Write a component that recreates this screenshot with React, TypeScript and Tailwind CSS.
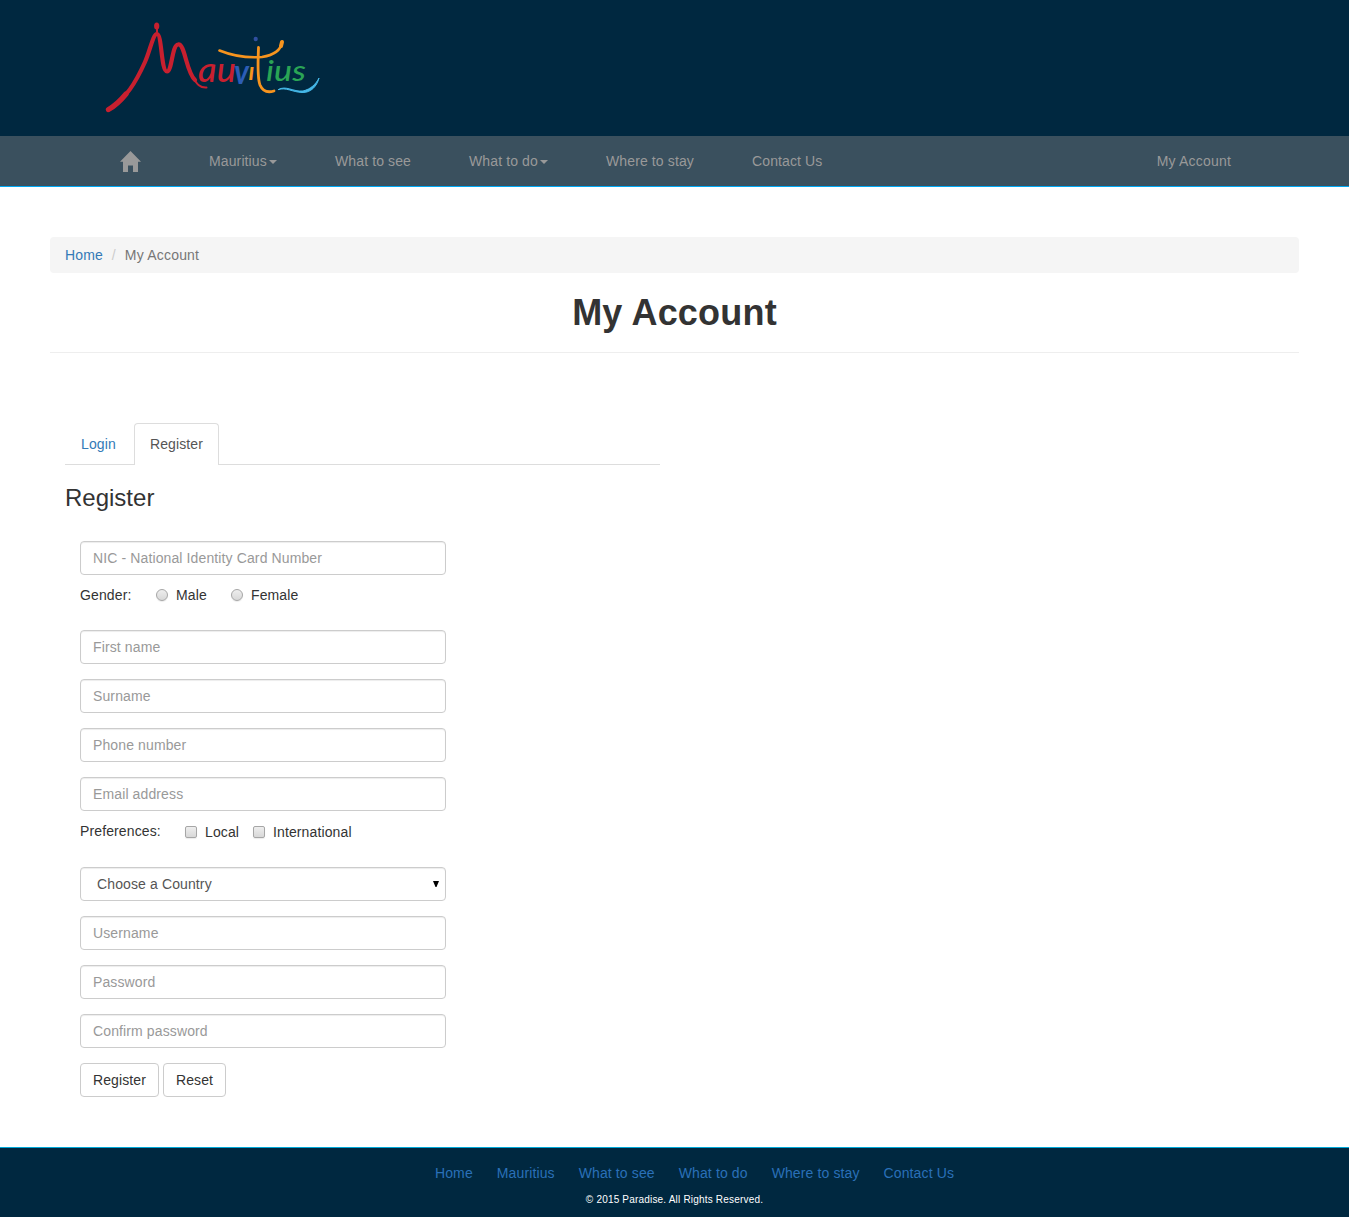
import React from "react";

function Logo() {
  return (
    <svg className="block h-[105px] w-[225px]" viewBox="100 15 225 105" fill="none" strokeLinecap="round" strokeLinejoin="round" role="img" aria-label="Mauritius">
      <path d="M108 110C126 99 136 82 145 62C150 51 153 34 157 34C162 34 161 71.500 167 71.500C172 71.500 172 45 178 44.500C185 43 186 72 195 80" stroke="#c8202f" strokeWidth="4.200" />
      <path d="M193 78C197 84 200 88 206.500 87.500" stroke="#c8202f" strokeWidth="2" />
      <path d="M108.500 109.500C115 106 121 100 126 94" stroke="#c8202f" strokeWidth="5.200" />
      <ellipse cx="156.700" cy="26" rx="2.600" ry="3.600" fill="#c8202f" />
      <path d="M157 27V32" stroke="#c8202f" strokeWidth="2" />
      <g fontFamily="Lato, sans-serif" fontStyle="italic" fontWeight="500">
        <text x="198" y="81.500" fontSize="34" fill="#c8202f" textLength="38" lengthAdjust="spacingAndGlyphs">au</text>
        <text x="234" y="83.500" fontSize="34" fill="#2c5db5" fontWeight="700" textLength="15" lengthAdjust="spacingAndGlyphs">v</text>
        <text x="248.500" y="80" fontSize="24" fill="#f7941e" fontWeight="700">ı</text>
        <text x="266" y="80.500" fontSize="28" fill="#2aa455" textLength="40" lengthAdjust="spacingAndGlyphs">ius</text>
      </g>
      <path d="M219.500 50.500C233 56 249 58 262 57C274 55 281 50 282 42" stroke="#f7941e" strokeWidth="2.600" />
      <path d="M281 46L282 42" stroke="#f7941e" strokeWidth="4" />
      <path d="M258.500 47.500C258 65 257 77 260 85C263 92 269 92.500 274 91" stroke="#f7941e" strokeWidth="2.800" />
      <ellipse cx="255.700" cy="39" rx="2.100" ry="2.300" fill="#2f4fa0" />
      <path d="M278.500 89.500C286 85 293 92 303 91C311 89 316 84 319 78C317 86 311 93 302 92.500C292 92 286 87 278.500 89.500Z" fill="#45b8e8" stroke="#45b8e8" strokeWidth="1" />
    </svg>
  );
}

function Caret() {
  return <span className="ml-0.5 inline-block border-x-4 border-t-4 border-x-transparent align-middle" />;
}

function Header() {
  return (
    <header>
      <div className="h-[136px] bg-[#002840] pl-[100px] pt-[15px]">
        <Logo />
      </div>
      <nav className="flex h-[51px] items-start border-b border-[#00a8f3] bg-[#3a505e] pl-[120px] pr-[118px] pt-[15px] text-[#999]">
        <a className="mr-[68px] block w-[21px]" aria-label="Home">
          <svg className="block h-[21px] w-[21px]" viewBox="0 0 21 21" fill="currentColor">
            <path d="M10.500 0 21 10.700H18V21H13V14.500H8V21H3V10.700H0Z" />
          </svg>
        </a>
        <a className="w-[126px]">Mauritius<Caret /></a>
        <a className="w-[134px]">What to see</a>
        <a className="w-[137px]">What to do<Caret /></a>
        <a className="w-[146px]">Where to stay</a>
        <a>Contact Us</a>
        <a className="ml-auto tracking-[0.2px]">My Account</a>
      </nav>
    </header>
  );
}

function Field({ label, type = "text" }: { label: string; type?: string }) {
  return (
    <input
      type={type}
      placeholder={label}
      className="mb-[15px] block h-[34px] w-full rounded border border-[#ccc] bg-white px-3 py-1.5 leading-5 shadow-[inset_0_1px_1px_rgba(0,0,0,0.075)] placeholder:text-[#999]"
    />
  );
}

const box =
  "mr-2 block size-3 appearance-none border border-[#a6a6a6] bg-linear-to-b from-[#eee] to-[#d8d8d8] shadow-[0_1px_1px_rgba(0,0,0,0.08)]";

function RegisterForm() {
  return (
    <form className="mt-[30px] ml-[15px] w-[366px]">
      <Field label="NIC - National Identity Card Number" />
      <div className="-mt-[5px] mb-[25px] flex h-5 items-center">
        <span className="w-[76px]">Gender:</span>
        <label className="flex w-[75px] items-center">
          <input type="radio" name="gender" className={box + " rounded-full"} />Male
        </label>
        <label className="flex items-center">
          <input type="radio" name="gender" className={box + " rounded-full"} />Female
        </label>
      </div>
      <Field label="First name" />
      <Field label="Surname" />
      <Field label="Phone number" />
      <Field label="Email address" />
      <div className="-mt-[5px] mb-[25px] flex h-[21px] items-start">
        <span className="w-[105px]">Preferences:</span>
        <label className="mt-px flex w-[68px] items-center">
          <input type="checkbox" className={box + " rounded-[2px]"} />Local
        </label>
        <label className="mt-px flex items-center">
          <input type="checkbox" className={box + " rounded-[2px]"} />International
        </label>
      </div>
      <div className="mb-[15px] flex h-[34px] items-center justify-between rounded border border-[#ccc] pl-4 pr-1.5 text-[#555] shadow-[inset_0_1px_1px_rgba(0,0,0,0.075)]">
        <span>Choose a Country</span>
        <svg className="h-1.5 w-1.5" viewBox="0 0 6 6"><path d="M0 0H6L3.500 6H2.500Z" fill="black" /></svg>
      </div>
      <Field label="Username" />
      <Field label="Password" type="password" />
      <Field label="Confirm password" type="password" />
      <div className="flex gap-1">
        <button type="button" className="h-[34px] w-[79px] rounded border border-[#ccc] bg-white leading-5">Register</button>
        <button type="button" className="h-[34px] w-[63px] rounded border border-[#ccc] bg-white leading-5">Reset</button>
      </div>
    </form>
  );
}

const footerLinks = ["Home", "Mauritius", "What to see", "What to do", "Where to stay", "Contact Us"];

export default function App() {
  return (
    <div className="min-h-[1217px] bg-white font-['Liberation_Sans',Arial,sans-serif] text-[14px] leading-5 tracking-[0.12px] text-[#333]">
      <Header />
      <main className="mx-[50px] h-[960px] pt-[50px]">
        <div className="flex h-9 items-center rounded bg-[#f5f5f5] px-[15px]">
          <a className="text-[#337ab7]">Home</a>
          <span className="w-[22px] text-center text-[#ccc]">/</span>
          <span className="tracking-[0.2px] text-[#777]">My Account</span>
        </div>
        <h1 className="mt-5 border-b border-[#eee] pb-5 text-center text-[36px] leading-[39px] font-bold tracking-[0.2px]">My Account</h1>
        <section className="mt-[70px] ml-[15px] w-[595px]">
          <div className="flex h-[42px] border-b border-[#ddd]">
            <a className="mr-[2px] w-[67px] pt-[11px] pl-4 text-[#337ab7]">Login</a>
            <a className="h-[42px] w-[85px] rounded-t border border-b-0 border-[#ddd] bg-white pt-[10px] text-center text-[#555]">Register</a>
          </div>
          <h3 className="mt-[19px] text-[24px] leading-[27px] tracking-normal">Register</h3>
          <RegisterForm />
        </section>
      </main>
      <footer className="h-[70px] border-t border-[#00a8d8] bg-[#002840] pt-[15px]">
        <div className="flex justify-center gap-6 pl-10 text-[#2a70b8]">
          {footerLinks.map((name) => <a key={name}>{name}</a>)}
        </div>
        <p className="mt-[10px] text-center text-[10px] leading-[14px] tracking-[0.19px] text-white">© 2015 Paradise. All Rights Reserved.</p>
      </footer>
    </div>
  );
}
